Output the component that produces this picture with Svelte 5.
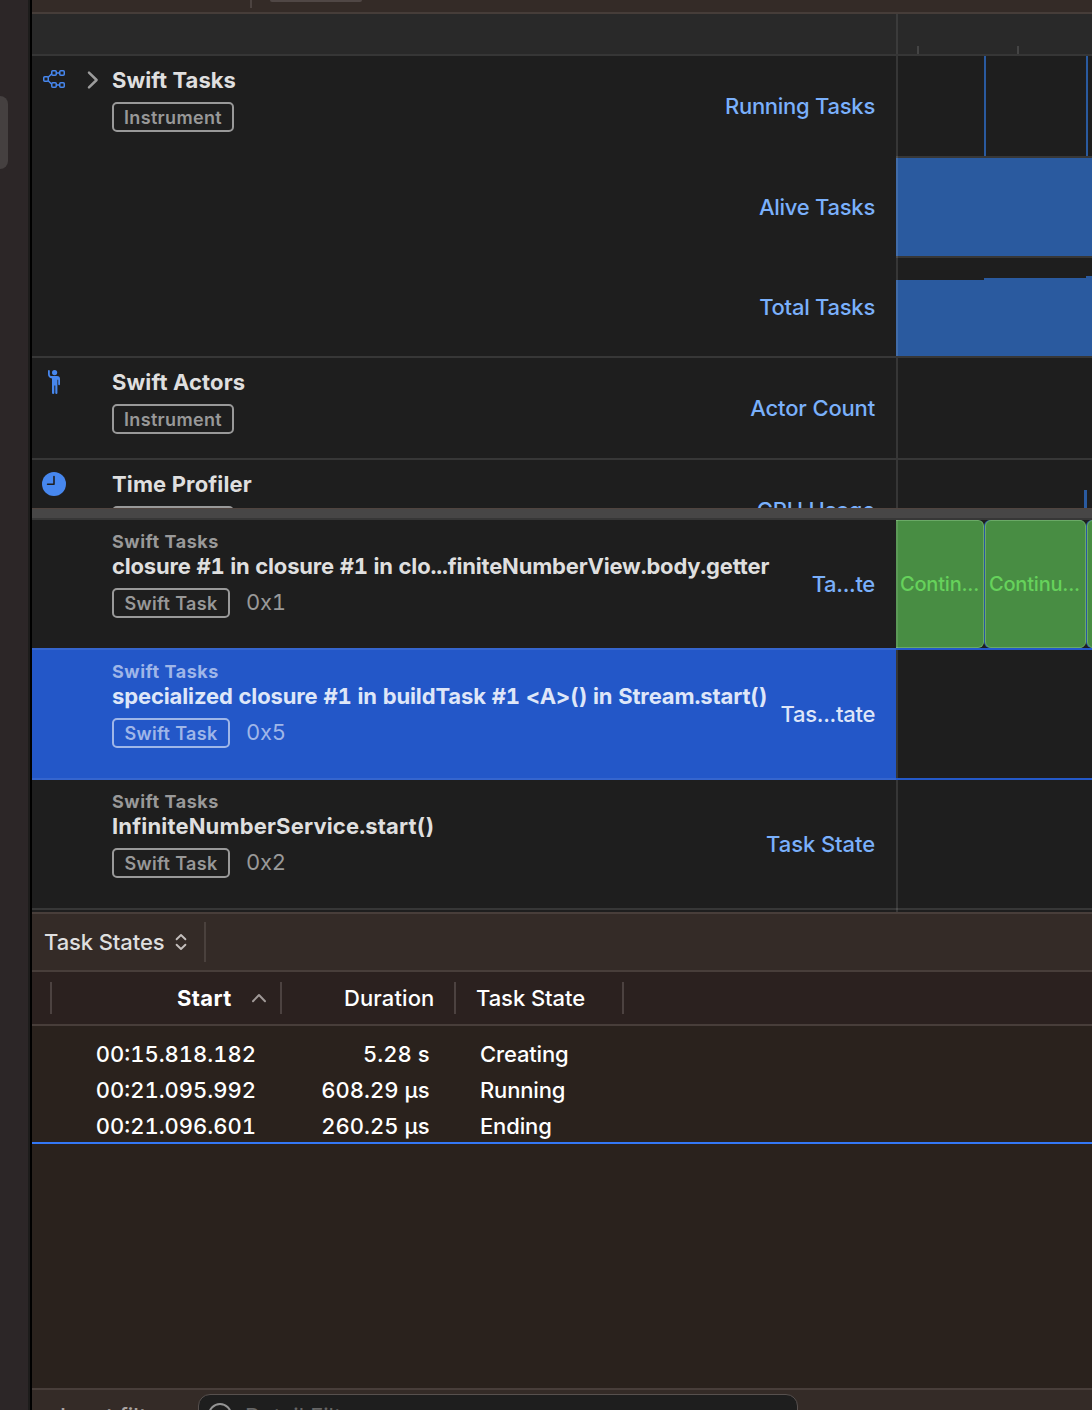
<script>
  const tracks = [
    {
      id: 'tasks', name: 'Swift Tasks', expandable: true,
      lanes: ['Running Tasks', 'Alive Tasks', 'Total Tasks']
    },
    { id: 'actors', name: 'Swift Actors', lanes: ['Actor Count'] },
    { id: 'profiler', name: 'Time Profiler', lanes: ['CPU Usage'] }
  ];

  const pinned = [
    { name: 'closure #1 in closure #1 in clo...finiteNumberView.body.getter', address: '0x1', label: 'Ta...te', fit: 'long', states: true },
    { name: 'specialized closure #1 in buildTask #1 <A>() in Stream.start()', address: '0x5', label: 'Tas...tate', fit: 'mid', selected: true },
    { name: 'InfiniteNumberService.start()', address: '0x2', label: 'Task State', fit: 'short' }
  ];

  const rows = [
    { start: '00:15.818.182', duration: '5.28 s', state: 'Creating' },
    { start: '00:21.095.992', duration: '608.29 µs', state: 'Running' },
    { start: '00:21.096.601', duration: '260.25 µs', state: 'Ending' }
  ];
</script>

<div class="screen">
  <aside class="edge"><div class="thumb"></div></aside>

  <main class="window">
    <header class="toolbar">
      <span class="toolbar-rule"></span>
      <span class="toolbar-pill"></span>
    </header>

    <div class="ruler">
      <div class="ruler-side"></div>
      <div class="ruler-time"><i></i><i></i></div>
    </div>

    <section class="tracks">
      {#each tracks as track (track.id)}
        <div class="track {track.id}">
          <div class="icon">
            {#if track.id === 'tasks'}
              <svg width="24" height="20" viewBox="0 0 24 20" fill="none" stroke="#4787ee" stroke-width="1.5">
                <rect x="1.75" y="7.75" width="4.5" height="4.5" rx="1" />
                <rect x="9.75" y="1.75" width="4.5" height="4.5" rx="1" />
                <rect x="17.75" y="1.75" width="4.5" height="4.5" rx="1" />
                <rect x="9.75" y="13.75" width="4.5" height="4.5" rx="1" />
                <rect x="17.75" y="13.75" width="4.5" height="4.5" rx="1" />
                <path d="M14.3 4h3.4M14.3 16h3.4M6.2 8.2 9.8 4.8M6.2 11.8l3.6 3.4" />
              </svg>
            {:else if track.id === 'actors'}
              <svg width="14" height="26" viewBox="0 0 14 26" fill="#4787ee">
                <circle cx="7.6" cy="3.6" r="2.6" />
                <path d="M1 1.9Q1 1 1.9 1 2.8 1 2.8 1.9V5.5Q2.8 7 4.3 7H10Q13 7 13 10V15.2Q13 16.2 12.1 16.2 11.2 16.2 11.2 15.2V10.8H10.4V24Q10.4 25 9.4 25 8.3 25 8.3 24V16.5H7.3V24Q7.3 25 6.2 25 5 25 5 24V9.4Q1 8.8 1 5.2Z" />
              </svg>
            {:else}
              <svg width="24" height="24" viewBox="0 0 24 24">
                <circle cx="12" cy="12" r="12" fill="#4787ee" />
                <path d="M12 4.6V12.3H5.6" fill="none" stroke="#1e1e1e" stroke-width="1.6" stroke-linecap="round" stroke-linejoin="round" />
              </svg>
            {/if}
          </div>
          <div class="disclosure">
            {#if track.expandable}
              <svg width="12" height="20" viewBox="0 0 12 20" fill="none" stroke="#9c9c9c" stroke-width="2.5" stroke-linecap="round" stroke-linejoin="round">
                <path d="M2 2.6 9.6 10 2 17.4" />
              </svg>
            {/if}
          </div>
          <div class="info">
            <h2>{track.name}</h2>
            <span class="badge wide">Instrument</span>
          </div>
          <div class="labels">
            {#each track.lanes as lane}<span>{lane}</span>{/each}
          </div>
          <div class="graph">
            {#if track.id === 'tasks'}
              <div class="lane"><i class="tick first"></i><i class="tick second"></i></div>
              <div class="lane full"></div>
              <div class="lane steps"><i></i><i></i><i></i></div>
            {:else if track.id === 'profiler'}
              <div class="cpu"></div>
            {/if}
          </div>
        </div>
      {/each}
    </section>

    <div class="splitter"></div>

    <section class="pinned">
      {#each pinned as task (task.address)}
        <div class="task" class:selected={task.selected}>
          <div class="task-info">
            <span class="kicker">Swift Tasks</span>
            <h2 class={task.fit}>{task.name}</h2>
            <div class="meta"><span class="badge">Swift Task</span><span class="address">{task.address}</span></div>
          </div>
          <div class="task-label">{task.label}</div>
          <div class="graph">
            {#if task.states}
              <div class="states">
                <span class="state a">Contin...</span>
                <span class="state b">Continu...</span>
                <span class="state c"></span>
              </div>
            {/if}
          </div>
        </div>
      {/each}
    </section>

    <nav class="detail-bar">
      <span>Task States</span>
      <svg width="12" height="18" viewBox="0 0 12 18" fill="none" stroke="#c4bfbd" stroke-width="1.9" stroke-linecap="round" stroke-linejoin="round">
        <path d="M1.6 6.3 6 2l4.4 4.3M1.6 11.7 6 16l4.4-4.3" />
      </svg>
      <i></i>
    </nav>

    <div class="table-head">
      <span class="h-start"><b>Start</b>
        <svg width="16" height="10" viewBox="0 0 16 10" fill="none" stroke="#a09997" stroke-width="2" stroke-linecap="round" stroke-linejoin="round"><path d="M2 8.2 8 2l6 6.2" /></svg>
      </span>
      <span class="h-duration">Duration</span>
      <span class="h-state">Task State</span>
    </div>

    <div class="table-body">
      {#each rows as row}
        <div class="row">
          <span class="start">{row.start}</span>
          <span class="duration">{row.duration}</span>
          <span class="value">{row.state}</span>
        </div>
      {/each}
    </div>
    <div class="empty"></div>

    <footer>
      <span class="filter-label">Input filter</span>
      <div class="filter">
        <svg width="24" height="24" viewBox="0 0 24 24" fill="none" stroke="#949494" stroke-width="2"><circle cx="12" cy="12" r="11" /><path d="M6.5 9h11M8.5 12.5h7M10.5 16h3" /></svg>
        <span>Detail Filter</span>
      </div>
    </footer>
  </main>
</div>

<style>
  :global(body) { overflow: hidden; background: #2a221d; }

  .screen {
    display: grid;
    grid-template-columns: 32px 1fr;
    width: 1092px;
    height: 1410px;
    overflow: hidden;
    font-family: Inter, "Liberation Sans", sans-serif;
    font-size: 22px;
    color: #dfdfdf;
  }
  .screen :is(h2, i) { margin: 0; display: block; }
  .screen h2 { font-size: 22px; font-weight: 700; white-space: nowrap; }

  .edge {
    padding-top: 96px;
    background: #2c2627;
    border-right: 2px solid #000;
    box-shadow: inset -2px 0 #1d1c1b;
  }
  .thumb { width: 8px; height: 73px; background: #454040; border-radius: 0 8px 8px 0; }

  .window { display: flex; flex-direction: column; min-width: 0; height: 1410px; overflow: hidden; }
  .window > * { flex: none; }

  .toolbar { display: flex; height: 14px; box-sizing: border-box; border-bottom: 2px solid #463d39; background: #342b27; }
  .toolbar-rule { width: 2px; height: 8px; margin-left: 218px; background: #4c4340; }
  .toolbar-pill { width: 92px; height: 2px; margin-left: 18px; background: #504745; border-radius: 0 0 8px 8px; }

  .ruler { display: grid; grid-template-columns: 864px 1fr; height: 42px; box-sizing: border-box; background: #292929; border-bottom: 2px solid #363636; }
  .ruler-time { display: flex; align-items: flex-end; gap: 98px; padding-left: 19px; border-left: 2px solid #3b3b3b; }
  .ruler-time i { width: 2px; height: 8px; background: #444; }

  .tracks { height: 452px; overflow: hidden; background: #1e1e1e; }
  .track {
    display: grid;
    grid-template-columns: 44px 36px 1fr auto 196px;
    height: 102px;
    box-sizing: border-box;
    border-bottom: 2px solid #373737;
  }
  .track.tasks { height: 302px; }
  .icon { display: flex; justify-content: center; align-items: flex-start; padding-top: 11px; }
  .tasks .icon { padding-top: 13px; }
  .profiler .icon { padding-top: 12px; }
  .disclosure { padding: 14px 0 0 11px; line-height: 0; }
  .info { display: flex; flex-direction: column; align-items: flex-start; gap: 8px; padding-top: 10px; }
  .info h2 { line-height: 28px; letter-spacing: .13px; }
  .tasks h2 { letter-spacing: .04px; }

  .badge {
    display: flex;
    align-items: center;
    justify-content: center;
    box-sizing: border-box;
    width: 118px;
    height: 30px;
    border: 2px solid #999;
    border-radius: 5px;
    color: #989898;
    font-size: 18px;
    font-weight: 600;
    letter-spacing: .34px;
    white-space: nowrap;
  }
  .badge.wide { width: 122px; }

  .labels { display: flex; flex-direction: column; padding-right: 21px; color: #7ab0fb; font-weight: 450; letter-spacing: -.16px; text-align: right; white-space: nowrap; }
  .tasks .labels { letter-spacing: -.26px; }
  .labels span { height: 100px; line-height: 100px; }
  .labels span + span { line-height: 102px; }

  .graph { position: relative; min-width: 0; }
  /* Translucent divider that tints whatever the graph draws beneath it. */
  .graph::before { content: ""; position: absolute; z-index: 1; top: 0; bottom: 0; left: 0; width: 2px; background: rgba(255, 255, 255, .11); }
  .task:last-child .graph::before { bottom: -4px; }

  .lane { display: flex; height: 100px; }
  .lane.full { height: 98px; background: #2a5a9f; border: solid #373737; border-width: 2px 0; }
  .tick { width: 2px; background: #2a5a9f; }
  .tick.first { margin-left: 88px; }
  .tick.second { margin-left: 100px; }
  .lane.steps { height: 98px; align-items: flex-end; }
  .steps i { background: #2a5a9f; height: 76px; width: 88px; }
  .steps i:nth-child(2) { height: 78px; width: 102px; }
  .steps i:nth-child(3) { height: 80px; width: 6px; }
  .cpu { width: 3px; height: 40px; margin: 30px 0 0 188px; background: #2a5a9f; }

  .splitter { height: 12px; box-sizing: border-box; background: #474646; border-top: 1px solid #50443f; border-bottom: 2px solid #373737; }

  .pinned { height: 392px; background: #1e1e1e; }
  .task { display: grid; grid-template-columns: 1fr auto 196px; height: 130px; box-sizing: border-box; border-bottom: 2px solid #373737; }
  .task:first-child { border-color: #2459c9; }
  .task:first-child .task-info,
  .task:first-child .task-label { box-shadow: 0 2px #3565ce; }
  .task-info { display: flex; flex-direction: column; padding: 8px 0 0 80px; }
  .kicker { height: 26px; color: #999; font-size: 18px; font-weight: 700; line-height: 28px; letter-spacing: .54px; }
  .task h2 { height: 24px; line-height: 24px; letter-spacing: -.18px; font-variant-numeric: tabular-nums; }
  .task h2.mid { letter-spacing: -.12px; }
  .task h2.short { letter-spacing: .16px; }
  .meta { display: flex; align-items: center; gap: 16px; margin-top: 10px; height: 30px; }
  .address { height: 30px; color: #999; line-height: 28px; letter-spacing: -.3px; font-variant-numeric: tabular-nums; }
  .task-label { padding-right: 21px; line-height: 128px; color: #7ab0fb; font-weight: 450; letter-spacing: -.3px; white-space: nowrap; }
  .task:last-child .task-label { letter-spacing: -.08px; }

  .selected { border-color: #2459c9; }
  .selected .task-info,
  .selected .task-label { background: #2357c8; color: #dee6f8; box-shadow: 0 2px #3565ce; }
  .selected .kicker,
  .selected .address { color: #9fb6e8; }
  .selected .badge { color: #9fb6e8; border-color: #9fb6e8; }

  .states { display: flex; height: 128px; overflow: hidden; background: #1e1e1e; }
  .state {
    flex: none;
    box-sizing: border-box;
    height: 128px;
    padding-left: 3px;
    background: #488d43;
    border: 1px solid #6aa966;
    border-radius: 6px;
    color: #66d25b;
    font-size: 20px;
    font-weight: 450;
    letter-spacing: -.2px;
    line-height: 126px;
    white-space: nowrap;
  }
  .state.a { width: 88px; border-left: 0; border-radius: 0 6px 6px 0; padding-left: 4px; }
  .state.b { width: 101px; }
  .state.c { width: 20px; }
  .state + .state { margin-left: 1px; box-shadow: -1px 0 #2857a5; }

  .detail-bar {
    display: flex;
    align-items: center;
    height: 60px;
    box-sizing: border-box;
    padding-left: 12px;
    border: solid #483e3a;
    border-width: 2px 0;
    background: #342b27;
    font-weight: 500;
    letter-spacing: -.1px;
    line-height: 56px;
  }
  .detail-bar span { width: 131px; }
  .detail-bar i { width: 2px; height: 40px; margin-left: 17px; background: #4a413d; }

  .table-head {
    display: flex;
    align-items: center;
    height: 54px;
    box-sizing: border-box;
    padding-left: 18px;
    border-bottom: 2px solid #483e3a;
    background: #2b211f;
    color: #fff;
    font-weight: 500;
  }
  .table-head > span { box-sizing: border-box; height: 32px; line-height: 32px; border-left: 2px solid #4c4240; }
  .h-start { display: flex; align-items: center; width: 230px; padding-left: 125px; }
  .h-start b { width: 74px; font-weight: 700; letter-spacing: .35px; flex: none; }
  .h-duration { width: 174px; padding-left: 62px; letter-spacing: .1px; }
  .h-state { width: 170px; padding-left: 20px; border-right: 2px solid #4c4240; letter-spacing: -.07px; }

  .table-body { height: 118px; box-sizing: border-box; padding-top: 10px; border-bottom: 2px solid #3478f6; background: #2a221d; color: #fff; font-weight: 500; font-variant-numeric: tabular-nums; }
  .row { display: grid; grid-template-columns: 224px 173.5px 1fr; height: 36px; line-height: 37px; white-space: nowrap; }
  .start, .duration { text-align: right; }
  .value { padding-left: 50.5px; letter-spacing: -.15px; }
  .empty { height: 244px; background: #2a221d; }

  footer { display: flex; height: 60px; box-sizing: border-box; border-top: 2px solid #483e3a; background: #342b27; }
  .filter-label { width: 138px; padding-left: 28px; line-height: 52px; color: #a9a3a1; font-weight: 500; white-space: nowrap; }
  .filter { display: flex; gap: 13px; box-sizing: border-box; width: 600px; height: 44px; margin-top: 4px; padding: 8px 0 0 9px; background: #1e1e1e; border: 1px solid #57504e; border-radius: 12px; color: #666; line-height: 26px; }
</style>
